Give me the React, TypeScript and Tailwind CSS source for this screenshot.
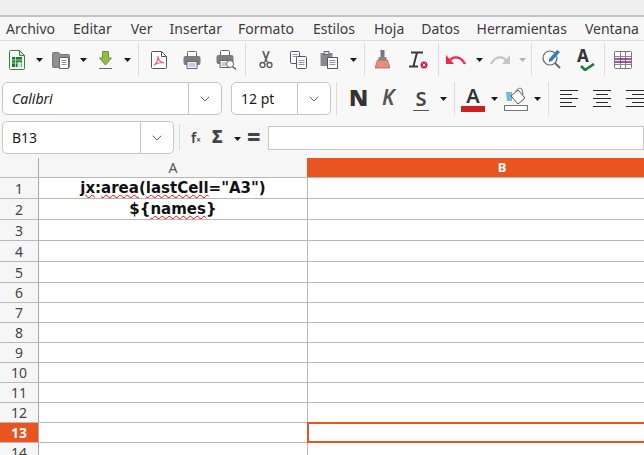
import { ReactNode } from "react";
import { ChevronDown } from "lucide-react";

const menus = [
  ["Archivo", "ml-[6px]"],
  ["Editar", "ml-[18px]"],
  ["Ver", "ml-[19px]"],
  ["Insertar", "ml-[17px]"],
  ["Formato", "ml-[16px]"],
  ["Estilos", "ml-[19px]"],
  ["Hoja", "ml-[19px]"],
  ["Datos", "ml-[17px]"],
  ["Herramientas", "ml-[17px]"],
  ["Ventana", "ml-[18px]"],
];

const rows = Array.from({ length: 14 }, (_, i) => i + 1);

function Arrow({ className = "", light }: { className?: string; light?: boolean }) {
  return (
    <svg width="7" height="4" viewBox="0 0 7 4" className={`shrink-0 ${className}`}>
      <path d="M0 0h7L3.5 4z" fill={light ? "#b5b5b5" : "#1a1a1a"} />
    </svg>
  );
}

function Sep({ className = "" }: { className?: string }) {
  return <div className={`h-[33px] w-px shrink-0 bg-[#dcdcdc] ${className}`} />;
}

function Icon({ w, h, className = "", children }: { w: number; h: number; className?: string; children: ReactNode }) {
  return (
    <svg width={w} height={h} viewBox={`0 0 ${w} ${h}`} fill="none" className={`shrink-0 ${className}`}>
      {children}
    </svg>
  );
}

function Combo({ label, className, split, italic }: { label: string; className: string; split: string; italic?: boolean }) {
  return (
    <div className={`flex h-[33px] shrink-0 items-stretch rounded-[5px] border border-[#c6c6c6] bg-white ${className}`}>
      <div className={`flex items-center pl-[9px] text-[14px] text-[#1c1c1c] ${split} ${italic ? "italic" : ""}`}>{label}</div>
      <div className="flex flex-1 items-center justify-center border-l border-[#c6c6c6]">
        <ChevronDown size={16} strokeWidth={1.3} color="#4a4a4a" />
      </div>
    </div>
  );
}

function AlignLines({ kind }: { kind: "left" | "center" | "right" }) {
  const xs = kind === "left" ? [0, 0, 0, 0, 0] : kind === "center" ? [0, 3, 0, 3, 0] : [0, 6, 0, 6, 0];
  const lens = kind === "left" ? [18, 12, 18, 12, 16] : [18, 12, 18, 12, 18];
  return (
    <>
      {[0, 4, 8, 12, 16].map((y, i) => (
        <path key={y} d={`M${xs[i]} ${y + 0.5}h${lens[i]}`} stroke="#2b2b2b" />
      ))}
    </>
  );
}

export default function App() {
  return (
    <div className="h-[455px] w-[644px] overflow-hidden bg-white font-['Noto_Sans',sans-serif] text-[#3d3d3d]">
      <div className="h-[15px] border-b-2 border-[#c4c4c4] bg-[#efefef] box-content" />

      {/* menu bar */}
      <div className="flex h-[24px] items-center overflow-hidden whitespace-nowrap border-b border-[#dedede] bg-[#f7f7f7] text-[14px] text-[#3c3c3c]">
        {menus.map(([m, c]) => (
          <span key={m} className={`shrink-0 ${c}`}>{m}</span>
        ))}
      </div>

      {/* standard toolbar */}
      <div className="flex h-[37px] items-center overflow-hidden bg-[#f8f8f8] pl-[9px]">
        <Icon w={16} h={20}>
          <path d="M.5 1.500a1 1 0 0 1 1-1h9l5 5v13a1 1 0 0 1-1 1h-13a1 1 0 0 1-1-1z" fill="#fff" stroke="#2e8b3a" />
          <path d="M10.500.5v5h5z" fill="#cfe8c8" stroke="#2e8b3a" />
          <path d="M3 7h10v10H3z" fill="#1d7a35" />
          <path d="M3 10h10M3 13h10M6.500 7v10" stroke="#cdeccd" strokeWidth=".8" />
          <path d="M8.500 17v-4l2-1.500 2 1.500v4z" fill="#cdeccd" />
        </Icon>
        <Arrow className="ml-[11px]" />
        <Icon w={18} h={18} className="ml-[9px]">
          <path d="M.5 2.500a1 1 0 0 1 1-1h5l2 2h8a1 1 0 0 1 1 1v11a1 1 0 0 1-1 1h-15a1 1 0 0 1-1-1z" fill="#8f8f8f" stroke="#777" />
          <path d="M7.500 6.500h9v11h-9z" fill="#fff" stroke="#666" />
          <path d="M9.500 9.500h5M9.500 11.500h5M9.500 13.500h5" stroke="#8e8ed8" />
        </Icon>
        <Arrow className="ml-[10px]" />
        <Icon w={13} h={18} className="ml-[12px]">
          <path d="M3.500.5h6v6.500h3L6.500 14 .5 7h3z" fill="#92c03e" stroke="#6f7f55" strokeWidth=".9" />
          <path d="M0 17.500h13" stroke="#666" />
        </Icon>
        <Arrow className="ml-[12px]" />
        <Sep className="ml-[7px]" />
        <Icon w={16} h={18} className="ml-[12px]">
          <path d="M.5 1.500a1 1 0 0 1 1-1h9l5 5v11a1 1 0 0 1-1 1h-13a1 1 0 0 1-1-1z" fill="#fff" stroke="#555" />
          <path d="M10.500.5v5h5" stroke="#555" />
          <path d="M3 14c3-2 4-5 4-9 0 3 2 6 6 7-3-.5-7 0-10 2z" stroke="#ed5f6d" strokeWidth="1.100" />
        </Icon>
        <Icon w={18} h={18} className="ml-[16px]">
          <path d="M4.500 5V1.500a1 1 0 0 1 1-1h7a1 1 0 0 1 1 1V5" fill="#fff" stroke="#666" />
          <rect x=".5" y="5" width="17" height="9" rx="2" fill="#7d7d7d" />
          <path d="M4 10.500h10v7H4z" fill="#fff" stroke="#666" />
          <path d="M5.500 13h7M5.500 15h7" stroke="#8e8ed8" />
        </Icon>
        <Icon w={21} h={20} className="ml-[15px]">
          <path d="M4.500 5V1.500a1 1 0 0 1 1-1h7a1 1 0 0 1 1 1V5" fill="#fff" stroke="#666" />
          <rect x=".5" y="5" width="17" height="9" rx="2" fill="#7d7d7d" />
          <path d="M4 10.500h10v7H4z" fill="#fff" stroke="#666" />
          <path d="M5.500 13h5M5.500 15h5" stroke="#8e8ed8" />
          <circle cx="14" cy="14" r="3.500" fill="#fff" stroke="#666" />
          <path d="M16.500 16.500l3.500 3" stroke="#555" strokeWidth="1.300" />
        </Icon>
        <Sep className="ml-[8px]" />
        <Icon w={14} h={17} className="ml-[13px]">
          <path d="M4 0l4 11M10 0L6 11" stroke="#666" strokeWidth="1.900" />
          <circle cx="3.500" cy="14" r="2.500" stroke="#555" strokeWidth="1.300" />
          <circle cx="10.500" cy="14" r="2.500" stroke="#555" strokeWidth="1.300" />
        </Icon>
        <Icon w={17} h={18} className="ml-[17px]">
          <path d="M.5 1.500a1 1 0 0 1 1-1h7a1 1 0 0 1 1 1v10a1 1 0 0 1-1 1h-7a1 1 0 0 1-1-1z" fill="#fff" stroke="#555" />
          <path d="M2.500 3.500h5M2.500 5.500h5" stroke="#8e8ed8" />
          <path d="M6.500 6.500a1 1 0 0 1 1-1h8a1 1 0 0 1 1 1v10a1 1 0 0 1-1 1h-8a1 1 0 0 1-1-1z" fill="#fff" stroke="#555" />
          <path d="M8.500 9.500h6M8.500 11.500h6M8.500 13.500h6" stroke="#8e8ed8" />
        </Icon>
        <Icon w={18} h={19} className="ml-[13px]">
          <path d="M.5 3h12v13H.5z" fill="#8a8a8a" />
          <path d="M4 1.500h5v3H4z" fill="#ddd" stroke="#666" />
          <path d="M7.500 7.500h10v11h-10z" fill="#fff" stroke="#555" />
          <path d="M9.500 10.500h6M9.500 12.500h6M9.500 14.500h6" stroke="#8e8ed8" />
        </Icon>
        <Arrow className="ml-[12px]" />
        <Sep className="ml-[7px]" />
        <Icon w={15} h={19} className="ml-[10px]">
          <path d="M5.500 0h4v7h-4z" fill="#777" />
          <path d="M3.500 7h8v3h-8z" fill="#888" />
          <path d="M2.500 10h10L15 18H0z" fill="#f08a78" stroke="#7d6a66" strokeWidth=".7" />
        </Icon>
        <Icon w={19} h={19} className="ml-[19px]">
          <path d="M2 2.500h12M8 2.500L4.500 16M0 16.500h9" stroke="#3a3a3a" strokeWidth="2" />
          <circle cx="15" cy="15" r="3.500" fill="#d81e3c" />
          <path d="M13.500 13.500l3 3M16.500 13.500l-3 3" stroke="#fff" />
        </Icon>
        <Sep className="ml-[10px]" />
        <Icon w={20} h={12} className="ml-[7px]">
          <path d="M3 8C6 2 14 1 19 10" stroke="#f0284a" strokeWidth="2.400" />
          <path d="M0 2v9h8z" fill="#f0284a" transform="translate(0 -1)" />
        </Icon>
        <Arrow className="ml-[10px]" />
        <Icon w={20} h={12} className="ml-[7px]">
          <path d="M17 8C14 2 6 1 1 10" stroke="#c6c6c6" strokeWidth="2.400" />
          <path d="M20 2v9h-8z" fill="#c6c6c6" transform="translate(0 -1)" />
        </Icon>
        <Arrow light className="ml-[9px]" />
        <Sep className="ml-[5px]" />
        <Icon w={20} h={21} className="ml-[10px]">
          <circle cx="8" cy="9" r="7" fill="#fff" stroke="#666" strokeWidth="1.200" />
          <path d="M13 14l5 5" stroke="#666" strokeWidth="2" />
          <path d="M7 10l8-9 3 2-8 9-3 1z" fill="#3a78c8" />
        </Icon>
        <div className="ml-[15px] flex w-[18px] shrink-0 flex-col items-start">
          <span className="h-[14px] text-[17px] font-bold leading-[14px] text-[#333]">A</span>
          <Icon w={15} h={8} className="ml-[3px]">
            <path d="M1 3l4 4 9-6" stroke="#1f7a3d" strokeWidth="2.600" />
          </Icon>
        </div>
        <Sep className="ml-[9px]" />
        <Icon w={18} h={18} className="ml-[9px]">
          <rect x=".5" y=".5" width="17" height="17" rx="1" fill="#fff" stroke="#777" />
          <path d="M6.500 1v16M11.500 1v16M1 5.500h16M1 13.500h16" stroke="#888" />
          <path d="M1 8h16M1 11h16" stroke="#8a1a8a" strokeWidth="1.400" />
        </Icon>
      </div>

      {/* formatting toolbar */}
      <div className="flex h-[48px] items-center overflow-hidden bg-[#f8f8f8] pb-[7px] pl-[2px]">
        <Combo label="Calibri" italic className="w-[220px]" split="w-[185px]" />
        <Combo label="12 pt" className="ml-[9px] w-[100px]" split="w-[65px]" />
        <Sep className="ml-[5px]" />
        <div className="mb-[3px] ml-[12px] w-[17px] text-[23px] font-black leading-none text-[#333]">N</div>
        <div className="mb-[3px] ml-[16px] w-[16px] text-[21px] italic font-semibold leading-none text-[#555]">K</div>
        <div className="ml-[15px] flex w-[16px] flex-col items-center border-b border-[#555] text-[20px] font-semibold leading-[23px] text-[#444]">S</div>
        <Arrow className="ml-[11px]" />
        <Sep className="ml-[7px]" />
        <div className="ml-[6px] flex w-[24px] flex-col items-center">
          <span className="text-[20px] font-semibold leading-[20px] text-[#333]">A</span>
          <div className="h-[6px] w-full bg-[#c9211e]" />
        </div>
        <Arrow className="ml-[6px]" />
        <Icon w={24} h={24} className="ml-[6px]">
          <path d="M2 5h6v9H3z" fill="#7ab8dc" />
          <path d="M7 9l7-6 7 8-7 6z" fill="#fff" stroke="#555" />
          <path d="M12 5c0-3 4-5 6-3l1 6" stroke="#777" />
          <path d="M.5 18.500h23v5H.5z" fill="#fff" stroke="#777" strokeWidth="1.200" />
        </Icon>
        <Arrow className="ml-[6px]" />
        <Sep className="ml-[7px]" />
        <Icon w={18} h={17} className="ml-[11px]"><AlignLines kind="left" /></Icon>
        <Icon w={18} h={17} className="ml-[15px]"><AlignLines kind="center" /></Icon>
        <Icon w={18} h={17} className="ml-[15px]"><AlignLines kind="right" /></Icon>
      </div>

      {/* formula bar */}
      <div className="flex h-[32px] items-start bg-[#f6f6f6] pl-[2px]">
        <Combo label="B13" className="mt-[-5px] w-[172px]" split="w-[137px]" />
        <div className="ml-[5px] mt-[-2px] h-[26px] w-px shrink-0 bg-[#dcdcdc]" />
        <div className="ml-[11px] mt-[4px] w-[12px] text-[14px] font-semibold leading-[16px] text-[#444]">
          f<span className="text-[8px]">×</span>
        </div>
        <div className="ml-[9px] mt-[1px] w-[13px] text-[17px] font-black leading-[20px] text-[#444]">Σ</div>
        <Arrow className="ml-[9px] mt-[11px]" />
        <div className="ml-[6px] mt-[-3px] w-[15px] text-[23px] font-black leading-[26px] text-[#444]">=</div>
        <div className="ml-[6px] h-[24px] flex-1 border border-[#c6c6c6] bg-white" />
      </div>

      {/* sheet */}
      <div className="flex h-[20px] border-b border-[#b8b8b8] text-[14px]">
        <div className="w-[39px] shrink-0 border-r border-[#a8a8a8] bg-[#f6f6f6]" />
        <div className="flex w-[268px] shrink-0 items-center justify-center bg-[#f6f6f6] text-[#555]">A</div>
        <div className="flex w-[390px] shrink-0 items-center justify-center bg-[#e95420] text-[13px] font-bold text-white">B</div>
      </div>
      {rows.map((r) => {
        const active = r === 13;
        return (
          <div key={r} className={`flex border-b border-[#b8b8b8] ${r <= 5 ? "h-[21px]" : "h-[20px]"}`}>
            <div className={`flex w-[39px] shrink-0 items-center justify-center border-r border-[#a8a8a8] text-[14px] ${active ? "bg-[#e95420] font-bold text-white" : "bg-[#f6f6f6] text-[#444]"}`}>
              {r}
            </div>
            <div className="flex w-[269px] shrink-0 items-center justify-center border-r border-[#b8b8b8] whitespace-nowrap font-['DejaVu_Sans',sans-serif] text-[15px] font-bold leading-none text-[#111]">
              {r === 1 && (
                <>
                  <span className="underline decoration-wavy decoration-[#f00] decoration-1">jx</span>:
                  <span className="underline decoration-wavy decoration-[#f00] decoration-1">area</span>(
                  <span className="underline decoration-wavy decoration-[#f00] decoration-1">lastCell</span>="A3")
                </>
              )}
              {r === 2 && (
                <>
                  {"${"}
                  <span className="underline decoration-wavy decoration-[#f00] decoration-1">names</span>
                  {"}"}
                </>
              )}
            </div>
            <div className={`flex-1 ${active ? "-ml-px mb-[-1px] mt-[-1px] border-2 border-r-0 border-[#e95420]" : ""}`} />
          </div>
        );
      })}
    </div>
  );
}
